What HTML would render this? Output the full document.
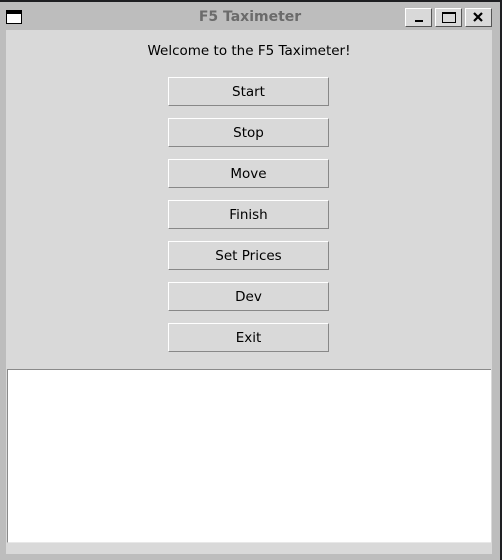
<!DOCTYPE html>
<html><head><style>
*{margin:0;padding:0;box-sizing:border-box}
body{width:502px;height:560px;background:#1e1f22;position:relative;overflow:hidden;font-family:"DejaVu Sans","Liberation Sans",sans-serif}
#win{position:absolute;left:0;top:2px;width:500px;height:558px;background:#bdbdbd}
#title{position:absolute;left:0;top:7px;width:500px;text-align:center;font-weight:bold;font-size:14px;color:#6b6b6b}
#ico{position:absolute;left:6px;top:8px;width:16px;height:14px;border:1px solid #000;border-top:4px solid #000;background:#fff}
.tb{position:absolute;top:6px;width:27px;height:19px;background:#d9d9d9;border:1px solid #555;border-color:#fff #555 #555 #fff}
#client{position:absolute;left:6px;top:28px;width:486px;height:524px;background:#d9d9d9}
#welcome{position:absolute;left:0;top:13px;width:486px;text-align:center;font-size:13.5px;color:#000}
.btn{position:absolute;left:162px;width:161px;height:29px;border:1px solid;border-color:#fff #888 #888 #fff;text-align:center;line-height:29px;font-size:13.5px;color:#000}
#text{position:absolute;left:1px;top:339px;width:484px;height:174px;background:#fff;border-top:1px solid #8a8a8a;border-left:1px solid #8a8a8a;border-bottom:1px solid #e8e8e8}
</style></head><body>
<div id="win">
<div id="ico"></div>
<div id="title">F5 Taximeter</div>
<div class="tb" style="left:405px"><div style="position:absolute;left:9px;top:11px;width:8px;height:2px;background:#000"></div></div>
<div class="tb" style="left:435px"><div style="position:absolute;left:6px;top:3px;width:14px;height:11px;border:1px solid #000;border-top:2px solid #000"></div></div>
<div class="tb" style="left:465px"><svg width="25" height="17" style="position:absolute;left:0;top:0"><path d="M8 4L16 12M16 4L8 12" stroke="#000" stroke-width="2.2"/></svg></div>
<div id="client">
<div id="welcome">Welcome to the F5 Taximeter!</div>
<div class="btn" style="top:47px">Start</div>
<div class="btn" style="top:88px">Stop</div>
<div class="btn" style="top:129px">Move</div>
<div class="btn" style="top:170px">Finish</div>
<div class="btn" style="top:211px">Set Prices</div>
<div class="btn" style="top:252px">Dev</div>
<div class="btn" style="top:293px">Exit</div>
<div id="text"></div>
</div>
</div>
</body></html>
